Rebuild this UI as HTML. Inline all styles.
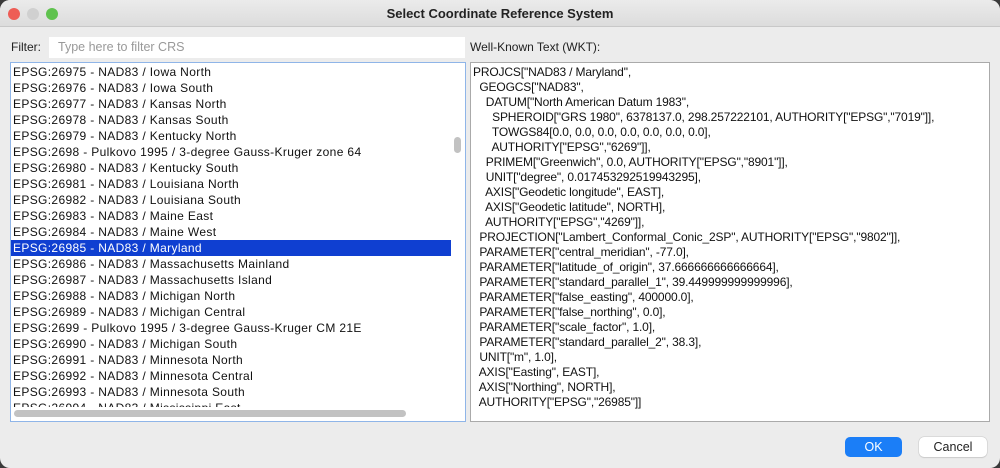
<!DOCTYPE html>
<html><head><style>
*{margin:0;padding:0;box-sizing:border-box}
body{width:1000px;height:468px;background:#3a3a3a;font-family:"Liberation Sans",sans-serif;font-size:12px;color:#111;position:relative;overflow:hidden}
.win{position:absolute;left:0;top:0;width:1000px;height:468px;background:#ececec;border-radius:10px;overflow:hidden}
.title{height:27px;background:linear-gradient(#ebebeb,#dcdcdc);border-bottom:1px solid #c8c8c8;text-align:center;font-weight:bold;font-size:13px;line-height:27px;color:#222}
.dot{position:absolute;top:8px;width:12px;height:12px;border-radius:50%}
.lbl{position:absolute;font-size:12px;color:#222}
.input{position:absolute;left:49px;top:37px;width:416px;height:21px;background:#fff;color:#999;padding-left:9px;line-height:21px;font-size:12.5px}
.list{position:absolute;left:10px;top:62px;width:456px;height:360px;background:#fff;border:1px solid #8fb5e8;overflow:hidden}
.list div{height:16px;line-height:16px;padding-left:2px;white-space:nowrap;font-size:12px;letter-spacing:0.35px}
.sel{background:#0f3fd1;color:#fff;margin-right:14px}
.wkt{position:absolute;left:470px;top:62px;width:520px;height:360px;background:#fff;border:1px solid #aaa;padding:2px 0 0 2px;white-space:pre;font-size:12px;line-height:15px;letter-spacing:-0.15px;overflow:hidden}
.btn{position:absolute;top:437px;height:20px;border-radius:5px;text-align:center;line-height:20px;font-size:12.5px}
</style></head><body><div class="win">
<div class="title">Select Coordinate Reference System</div>
<div class="dot" style="left:8px;background:#ee5d56"></div>
<div class="dot" style="left:27px;background:#d0d0d0"></div>
<div class="dot" style="left:46px;background:#5fc24e"></div>
<div class="lbl" style="left:11px;top:40px">Filter:</div>
<div class="input">Type here to filter CRS</div>
<div class="lbl" style="left:470px;top:40px">Well-Known Text (WKT):</div>
<div class="list">
<div style="margin-top:1px">EPSG:26975 - NAD83 / Iowa North</div>
<div>EPSG:26976 - NAD83 / Iowa South</div>
<div>EPSG:26977 - NAD83 / Kansas North</div>
<div>EPSG:26978 - NAD83 / Kansas South</div>
<div>EPSG:26979 - NAD83 / Kentucky North</div>
<div>EPSG:2698 - Pulkovo 1995 / 3-degree Gauss-Kruger zone 64</div>
<div>EPSG:26980 - NAD83 / Kentucky South</div>
<div>EPSG:26981 - NAD83 / Louisiana North</div>
<div>EPSG:26982 - NAD83 / Louisiana South</div>
<div>EPSG:26983 - NAD83 / Maine East</div>
<div>EPSG:26984 - NAD83 / Maine West</div>
<div class="sel">EPSG:26985 - NAD83 / Maryland</div>
<div>EPSG:26986 - NAD83 / Massachusetts Mainland</div>
<div>EPSG:26987 - NAD83 / Massachusetts Island</div>
<div>EPSG:26988 - NAD83 / Michigan North</div>
<div>EPSG:26989 - NAD83 / Michigan Central</div>
<div>EPSG:2699 - Pulkovo 1995 / 3-degree Gauss-Kruger CM 21E</div>
<div>EPSG:26990 - NAD83 / Michigan South</div>
<div>EPSG:26991 - NAD83 / Minnesota North</div>
<div>EPSG:26992 - NAD83 / Minnesota Central</div>
<div>EPSG:26993 - NAD83 / Minnesota South</div>
<div>EPSG:26994 - NAD83 / Mississippi East</div>
<span style="position:absolute;left:0;top:344px;width:440px;height:15px;background:#fff"></span>
<span style="position:absolute;left:3px;top:347px;width:392px;height:7px;border-radius:4px;background:#c2c2c2"></span>
<span style="position:absolute;left:443px;top:74px;width:7px;height:16px;border-radius:4px;background:#c2c2c2"></span>
</div>
<div class="wkt">PROJCS["NAD83 / Maryland",
  GEOGCS["NAD83",
    DATUM["North American Datum 1983",
      SPHEROID["GRS 1980", 6378137.0, 298.257222101, AUTHORITY["EPSG","7019"]],
      TOWGS84[0.0, 0.0, 0.0, 0.0, 0.0, 0.0, 0.0],
      AUTHORITY["EPSG","6269"]],
    PRIMEM["Greenwich", 0.0, AUTHORITY["EPSG","8901"]],
    UNIT["degree", 0.017453292519943295],
    AXIS["Geodetic longitude", EAST],
    AXIS["Geodetic latitude", NORTH],
    AUTHORITY["EPSG","4269"]],
  PROJECTION["Lambert_Conformal_Conic_2SP", AUTHORITY["EPSG","9802"]],
  PARAMETER["central_meridian", -77.0],
  PARAMETER["latitude_of_origin", 37.666666666666664],
  PARAMETER["standard_parallel_1", 39.449999999999996],
  PARAMETER["false_easting", 400000.0],
  PARAMETER["false_northing", 0.0],
  PARAMETER["scale_factor", 1.0],
  PARAMETER["standard_parallel_2", 38.3],
  UNIT["m", 1.0],
  AXIS["Easting", EAST],
  AXIS["Northing", NORTH],
  AUTHORITY["EPSG","26985"]]</div>
<div class="btn" style="left:845px;width:57px;background:#1b7ef7;color:#fff">OK</div>
<div class="btn" style="left:919px;width:68px;background:#fff;color:#222;box-shadow:0 0 0 0.5px #c8c8c8,0 1px 1px #ccc">Cancel</div>
</div></body></html>
